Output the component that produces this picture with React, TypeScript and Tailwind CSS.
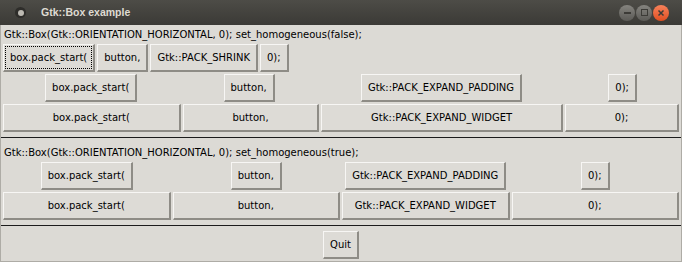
import React from "react";

type BtnProps = {
  label: string;
  focused?: boolean;
  className?: string;
};

function Btn(props: BtnProps) {
  const { label, focused, className } = props;
  return (
    <div
      className={
        "relative flex h-[28px] items-center justify-center whitespace-nowrap bg-[#dddbd6] px-[6px] text-[10px] text-black border-t border-l border-t-[#f7f6f4] border-l-[#f7f6f4] border-r-2 border-b-2 border-r-[#8e8c86] border-b-[#8e8c86] " +
        (className ?? "")
      }
    >
      {focused && <span className="absolute inset-[1px] border border-dotted border-black" />}
      {label}
    </div>
  );
}

function Padded({ label }: { label: string }) {
  return (
    <div className="flex grow basis-auto justify-center">
      <Btn label={label} />
    </div>
  );
}

function TitleBar() {
  return (
    <div className="flex h-[25px] items-center bg-gradient-to-b from-[#4d4c47] to-[#3b3a36] font-['Liberation_Sans',sans-serif]">
      <div className="ml-[15px] flex h-[11px] w-[11px] items-center justify-center rounded-full bg-[#2e2d2a]">
        <div className="h-[6px] w-[6px] rounded-full bg-[#bdbab3]" />
      </div>
      <span className="ml-[15px] text-[10.5px] font-bold text-[#dfdbd2]">Gtk::Box example</span>
      <div className="ml-auto mr-[13px] flex items-center gap-[1px]">
        <div className="flex h-[16px] w-[16px] items-center justify-center rounded-full bg-gradient-to-b from-[#85847f] to-[#5b5a56]">
          <div className="h-[2px] w-[7px] bg-[#3c3b37]" />
        </div>
        <div className="flex h-[16px] w-[16px] items-center justify-center rounded-full bg-gradient-to-b from-[#85847f] to-[#5b5a56]">
          <div className="h-[7px] w-[7px] border-[1.5px] border-[#3c3b37]" />
        </div>
        <div className="flex h-[16px] w-[16px] items-center justify-center rounded-full bg-gradient-to-b from-[#f78159] to-[#e04e1f]">
          <svg width="8" height="8" viewBox="0 0 8 8">
            <path d="M1.5 1.5 L6.5 6.5 M6.5 1.5 L1.5 6.5" stroke="#3c3b37" strokeWidth="1.5" />
          </svg>
        </div>
      </div>
    </div>
  );
}

export default function App() {
  return (
    <div className="flex h-[262px] w-[682px] flex-col overflow-hidden bg-[#dcdad5] font-['DejaVu_Sans',sans-serif]">
      <TitleBar />
      <div className="flex flex-1 flex-col border-x border-b border-[#aeaca6] px-[2px]">
        <div className="flex h-[19px] items-center pl-[1px] text-[10px] text-black">
          Gtk::Box(Gtk::ORIENTATION_HORIZONTAL, 0); set_homogeneous(false);
        </div>
        <div className="flex gap-[2px]">
          <Btn label="box.pack_start(" focused />
          <Btn label="button," />
          <Btn label="Gtk::PACK_SHRINK" />
          <Btn label="0);" />
        </div>
        <div className="mt-[2px] flex gap-[2px]">
          <Padded label="box.pack_start(" />
          <Padded label="button," />
          <Padded label="Gtk::PACK_EXPAND_PADDING" />
          <Padded label="0);" />
        </div>
        <div className="mt-[2px] flex gap-[2px]">
          <Btn label="box.pack_start(" className="grow" />
          <Btn label="button," className="grow" />
          <Btn label="Gtk::PACK_EXPAND_WIDGET" className="grow" />
          <Btn label="0);" className="grow" />
        </div>
        <div className="-mx-[2px] mt-[5px] h-[1px] bg-[#1c1c1c]" />
        <div className="mt-[4px] flex h-[20px] items-center pl-[1px] text-[10px] text-black">
          Gtk::Box(Gtk::ORIENTATION_HORIZONTAL, 0); set_homogeneous(true);
        </div>
        <div className="grid grid-cols-4 gap-[2px]">
          <div className="flex justify-center"><Btn label="box.pack_start(" /></div>
          <div className="flex justify-center"><Btn label="button," /></div>
          <div className="flex justify-center"><Btn label="Gtk::PACK_EXPAND_PADDING" /></div>
          <div className="flex justify-center"><Btn label="0);" /></div>
        </div>
        <div className="mt-[2px] grid grid-cols-4 gap-[2px]">
          <Btn label="box.pack_start(" />
          <Btn label="button," />
          <Btn label="Gtk::PACK_EXPAND_WIDGET" />
          <Btn label="0);" />
        </div>
        <div className="-mx-[2px] mt-[5px] h-[1px] bg-[#1c1c1c]" />
        <div className="mt-[5px] flex justify-center">
          <Btn label="Quit" />
        </div>
      </div>
    </div>
  );
}
